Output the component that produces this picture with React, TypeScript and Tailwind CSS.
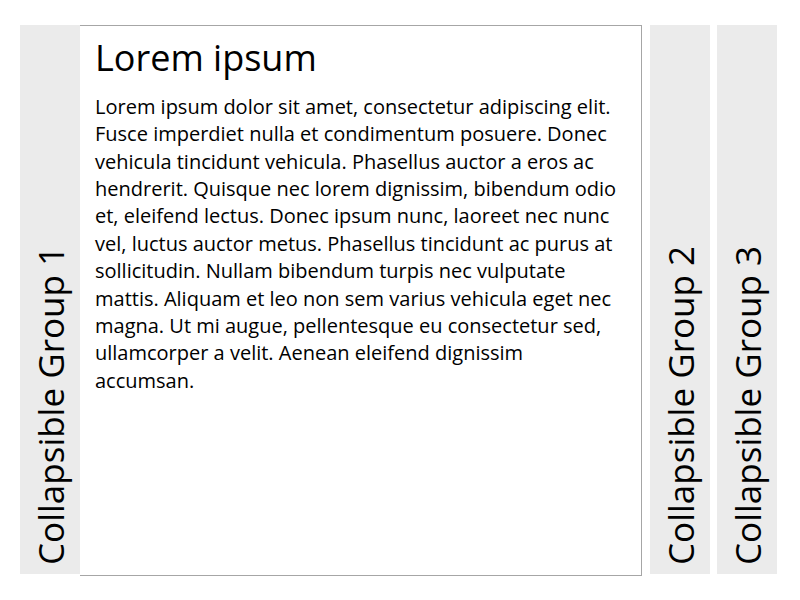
import React from 'react';

const body =
  'Lorem ipsum dolor sit amet, consectetur adipiscing elit. Fusce imperdiet nulla et condimentum posuere. Donec vehicula tincidunt vehicula. Phasellus auctor a eros ac hendrerit. Quisque nec lorem dignissim, bibendum odio et, eleifend lectus. Donec ipsum nunc, laoreet nec nunc vel, luctus auctor metus. Phasellus tincidunt ac purus at sollicitudin. Nullam bibendum turpis nec vulputate mattis. Aliquam et leo non sem varius vehicula eget nec magna. Ut mi augue, pellentesque eu consectetur sed, ullamcorper a velit. Aenean eleifend dignissim accumsan.';

function GroupTab({ label }: { label: string }) {
  return (
    <div className="flex h-[549px] w-[60px] shrink-0 items-end justify-center bg-[#ebebeb] pb-[9px]">
      <span className="rotate-180 text-[35px] leading-none text-black [writing-mode:vertical-rl]">
        {label}
      </span>
    </div>
  );
}

export default function App() {
  return (
    <div className="flex items-start bg-white pl-[20px] pt-[25px] font-['Open_Sans',sans-serif]">
      <GroupTab label="Collapsible Group 1" />
      <div className="h-[551px] w-[562px] shrink-0 border border-l-0 border-[#a6a6a6] px-[15px] pt-[9px]">
        <h1 className="text-[36px] leading-[1.3] text-black">Lorem ipsum</h1>
        <p className="mt-[11px] text-[20px] leading-[27.4px] text-black">{body}</p>
      </div>
      <div className="ml-[8px]">
        <GroupTab label="Collapsible Group 2" />
      </div>
      <div className="ml-[7px]">
        <GroupTab label="Collapsible Group 3" />
      </div>
    </div>
  );
}
